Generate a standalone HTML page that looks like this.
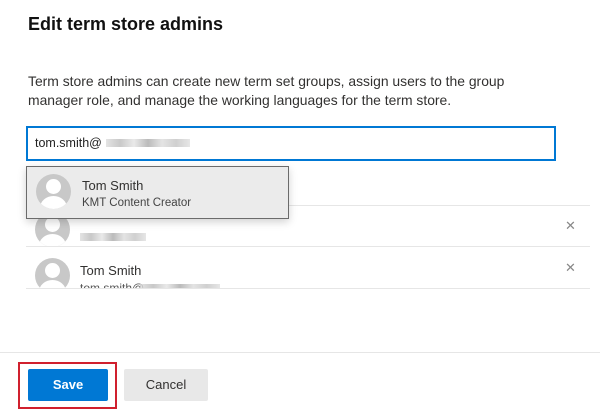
<!DOCTYPE html>
<html><head><style>
body{margin:0;width:600px;height:415px;background:#fff;font-family:"Liberation Sans",sans-serif;position:relative;overflow:hidden;color:#323130}
.a{position:absolute}
.av{position:absolute;width:35px;height:35px;border-radius:50%;background:#c8c8c8;overflow:hidden}
.av:before{content:"";position:absolute;left:10px;top:5px;width:15px;height:15px;border-radius:50%;background:#fff}
.av:after{content:"";position:absolute;left:4px;top:22px;width:27px;height:24px;border-radius:50%;background:#fff}
.blur{position:absolute;height:8px;background:linear-gradient(90deg,#ddd,#bbb,#e4e4e4,#aaa,#ddd,#c4c4c4,#e0e0e0);opacity:.8}
.line{position:absolute;left:26px;width:564px;height:1px;background:#e6e6e6}
.x{position:absolute;font-size:13px;color:#888;left:565px}
</style></head><body>
<div class="a" style="left:28px;top:14px;font-size:18px;font-weight:bold;color:#111">Edit term store admins</div>
<div class="a" style="left:28px;top:72px;font-size:13.9px;line-height:19px;color:#323130;width:560px;white-space:nowrap">Term store admins can create new term set groups, assign users to the group<br>manager role, and manage the working languages for the term store.</div>
<div class="a" style="left:26px;top:126px;width:526px;height:31px;border:2px solid #0078d4"></div>
<div class="a" style="left:35px;top:136px;font-size:12.5px;color:#222">tom.smith@</div>
<div class="blur" style="left:106px;top:139px;width:84px"></div>
<div class="line" style="top:205px"></div>
<div class="line" style="top:246px"></div>
<div class="line" style="top:288px"></div>
<div class="line" style="left:0;width:600px;top:352px"></div>
<div style="position:absolute;left:0;top:206px;width:600px;height:40px;overflow:hidden">
 <div class="av" style="left:35px;top:6px"></div>
 <div class="blur" style="left:80px;top:27px;width:66px"></div>
</div>
<div class="x" style="top:218px">✕</div>
<div style="position:absolute;left:0;top:247px;width:600px;height:41px;overflow:hidden">
 <div class="av" style="left:35px;top:11px"></div>
 <div class="a" style="left:80px;top:16px;font-size:13px">Tom Smith</div>
 <div class="a" style="left:80px;top:34px;font-size:12px;color:#555">tom.smith@</div>
 <div class="blur" style="left:140px;top:37px;width:80px"></div>
</div>
<div class="x" style="top:260px">✕</div>
<div class="a" style="left:26px;top:166px;width:261px;height:51px;background:#ebebeb;border:1px solid #6b6b6b;box-shadow:0 3px 8px rgba(0,0,0,.18)">
 <div class="av" style="left:9px;top:7px"></div>
 <div class="a" style="left:55px;top:11px;font-size:13px;color:#323130">Tom Smith</div>
 <div class="a" style="left:55px;top:30px;font-size:11.5px;color:#444">KMT Content Creator</div>
</div>
<div class="a" style="left:18px;top:362px;width:95px;height:43px;border:2px solid #d0202e"></div>
<div class="a" style="left:28px;top:369px;width:80px;height:32px;background:#0078d4;border-radius:2px;color:#fff;font-weight:bold;font-size:13px;text-align:center;line-height:32px">Save</div>
<div class="a" style="left:124px;top:369px;width:84px;height:32px;background:#e8e8e8;border-radius:2px;color:#323130;font-size:13px;text-align:center;line-height:32px">Cancel</div>
</body></html>
